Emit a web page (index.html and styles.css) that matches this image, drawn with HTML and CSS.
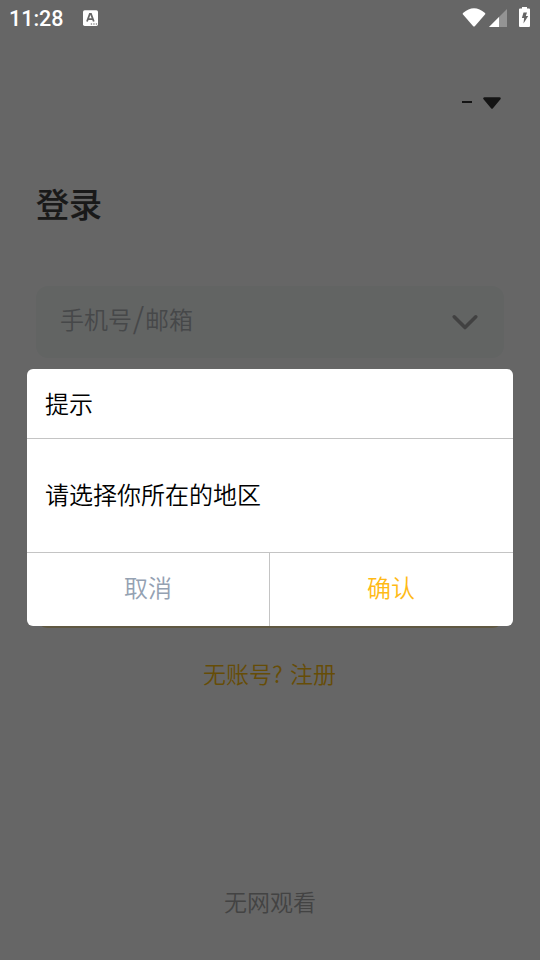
FILE: index.html
```html
<!DOCTYPE html>
<html lang="zh-CN">
<head>
<meta charset="utf-8">
<title>登录</title>
<link rel="stylesheet" href="styles.css">
</head>
<body>
<main class="page">
  <div class="region">
    <span class="region-dash"></span>
    <svg class="region-arrow" width="20" height="14" viewBox="0 0 20 14"><path d="M2.5 3.500h15L10 12.500z" fill="#333" stroke="#333" stroke-width="2.5" stroke-linejoin="round"/></svg>
  </div>
  <h1 class="title">登录</h1>
  <div class="field">
    <span class="placeholder">手机号<span class="slash">/</span>邮箱</span>
    <svg width="28" height="18" viewBox="0 0 28 18"><path d="M3.2 3.8 14 14.6 24.8 3.8" fill="none" stroke="#a2a2a2" stroke-width="3.6" stroke-linecap="round" stroke-linejoin="round"/></svg>
  </div>
  <div class="submit"></div>
  <a class="register">无账号? 注册</a>
  <a class="offline">无网观看</a>
</main>
<div class="scrim">
  <header class="status">
    <span class="time">11:28</span>
    <svg class="app-icon" width="16" height="17" viewBox="0 0 16 17"><rect x="0" y=".3" width="15" height="15.7" rx="1.7" fill="#fff"/><path d="M4 11.5 6.8 4h1.2l2.8 7.5M5 9.2h5" fill="none" stroke="#666" stroke-width="1.8"/><path d="M7.8 14h1.3M10.3 14h1.3M12.8 14h1.3" stroke="#555" stroke-width="1.2"/></svg>
    <svg class="signals" width="70" height="24" viewBox="0 0 70 24"><path d="M1 8Q12-1.4 23 8q.6.8 0 1.6L13 21q-1 1-2 0L1 9.600Q.4 8.800 1 8z" fill="#fff"/><path d="M27 22 45 4v18z" fill="#949494"/><path d="M27 22 37 12v10z" fill="#fff"/><path d="M60 2.500V2h5v1.500h2q1 0 1 1V21q0 1-1 1h-9q-1 0-1-1V4.500q0-1 1-1h2z" fill="#fff"/><path d="M61.500 7.500h3.500l-1.200 3.500h2.400L61.500 18.500l.6-5.500h-2.200z" fill="#666"/></svg>
  </header>
  <section class="dialog">
    <h2 class="dialog-title">提示</h2>
    <p class="message">请选择你所在的地区</p>
    <div class="actions">
      <button class="cancel">取消</button>
      <button class="confirm">确认</button>
    </div>
  </section>
</div>
</body>
</html>
```
FILE: styles.css
```css
* { box-sizing: border-box; }
body {
  margin: 0;
  position: relative;
  width: 540px;
  height: 960px;
  overflow: hidden;
  background: #fff;
  font-family: "Noto Sans CJK SC", sans-serif;
  font-size: 24px;
  font-weight: 350;
}
.page {
  display: flex;
  flex-direction: column;
  height: 960px;
  padding: 95px 36px 0;
}
.region {
  display: flex;
  justify-content: flex-end;
  align-items: center;
  height: 14px;
  gap: 10px;
  padding-right: 2px;
}
.region-dash { width: 10px; height: 2px; background: #333; }
.title {
  margin: 69px 0 0;
  height: 51px;
  line-height: 50px;
  font-size: 33px;
  font-weight: 500;
  color: #404040;
  -webkit-text-stroke: .2px #404040;
}
.field {
  display: flex;
  justify-content: space-between;
  align-items: center;
  height: 72px;
  margin-top: 57px;
  padding: 0 25px 0 24px;
  border-radius: 12px;
  background: #f5f9f8;
}
.placeholder { color: #b0b3b7; line-height: 36px; margin-top: -6px; }
.slash { display: inline-block; width: 13px; text-align: center; font-size: 29px; line-height: 1; }
.submit {
  height: 73px;
  margin-top: 197px;
  border-radius: 12px;
  background: #f0dca4;
}
.register {
  align-self: center;
  margin: 27px 1px 0 0;
  font-size: 23px;
  line-height: 36px;
  word-spacing: 2px;
  color: #ffc010;
}
.offline {
  align-self: center;
  margin-top: 192px;
  font-size: 23px;
  line-height: 36px;
  color: #a8a8a8;
}
.scrim {
  position: absolute;
  inset: 0;
  background: rgba(0, 0, 0, .6);
}
.status {
  display: flex;
  height: 36px;
  padding: 5px 8px 0 9px;
}
.time {
  width: 74px;
  color: #fff;
  font: 500 21.5px/27px Roboto, sans-serif;
}
.app-icon { margin-top: 5px; }
.signals { margin-left: auto; }
.dialog {
  width: 486px;
  margin: 333px auto 0;
  border-radius: 6px;
  overflow: hidden;
  background: #fff;
  color: #000;
}
.dialog-title {
  margin: 0;
  height: 70px;
  padding-left: 18px;
  border-bottom: 1px solid #c4c4c4;
  font-size: 24px;
  font-weight: inherit;
  line-height: 67px;
}
.message {
  margin: 0;
  height: 114px;
  padding-left: 18px;
  border-bottom: 1px solid #c4c4c4;
  line-height: 109px;
}
.actions { display: flex; height: 73px; }
.actions button {
  width: 243px;
  padding: 0 0 6px;
  border: 0;
  background: none;
  font: inherit;
}
.actions .cancel { border-right: 1px solid #c4c4c4; color: #94a1b2; }
.actions .confirm { padding-right: 1px; color: #ffba16; }
```
